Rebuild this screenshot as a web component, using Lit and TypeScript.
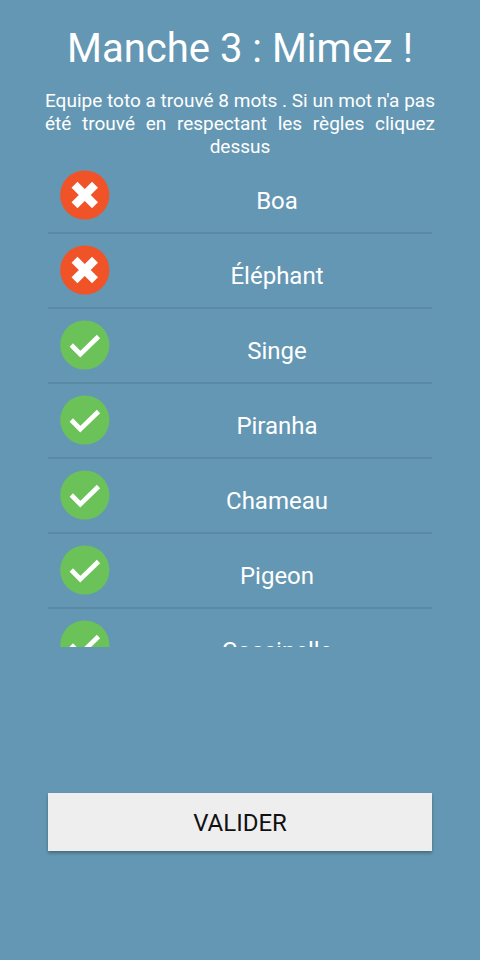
import { LitElement, html, css, svg } from "lit";
import { customElement, property, state } from "lit/decorators.js";

interface Word {
  label: string;
  found: boolean;
}

@customElement("word-row")
export class WordRow extends LitElement {
  @property() label = "";
  @property({ type: Boolean }) found = false;

  static styles = css`
    :host {
      display: block;
    }
    .row {
      display: grid;
      grid-template-columns: 50px 1fr;
      column-gap: 12px;
      align-items: center;
      width: 100%;
      height: 75px;
      padding: 0 0 2px 12px;
      border: 0;
      border-bottom: 2px solid #5a8aa4;
      background: none;
      color: #fff;
      font: 24px/30px Roboto, sans-serif;
      text-align: center;
      cursor: pointer;
    }
    .icon {
      display: block;
      width: 50px;
      height: 50px;
    }
    .label {
      padding-top: 12px;
    }
  `;

  render() {
    const mark = this.found
      ? svg`<circle cx="24.8" cy="25" r="24.6" fill="#6bc259"/>
          <path d="M11.3 25 20.3 34.2 38.5 16.5" fill="none" stroke="#fff" stroke-width="4.7"/>`
      : svg`<circle cx="24.8" cy="25" r="24.6" fill="#f15329"/>
          <path d="M14.5 14.8 35 35.2M35 14.8 14.5 35.2" stroke="#fff" stroke-width="8.4"/>`;
    return html`
      <button class="row" type="button" aria-pressed=${this.found ? "true" : "false"}>
        <svg class="icon" viewBox="0 0 50 50" aria-hidden="true">${mark}</svg>
        <span class="label">${this.label}</span>
      </button>
    `;
  }
}

@customElement("app-root")
export class AppRoot extends LitElement {
  @state() private words: Word[] = [
    { label: "Boa", found: false },
    { label: "Éléphant", found: false },
    { label: "Singe", found: true },
    { label: "Piranha", found: true },
    { label: "Chameau", found: true },
    { label: "Pigeon", found: true },
    { label: "Coccinelle", found: true },
  ];

  static styles = css`
    :host {
      display: block;
      box-sizing: border-box;
      min-height: 100vh;
      padding: 25px 10%;
      background: #6497b3;
      color: #fff;
      font-family: Roboto, sans-serif;
    }
    .title {
      margin: 0;
      font-size: 40px;
      line-height: 48px;
      font-weight: 400;
      text-align: center;
      white-space: nowrap;
    }
    .hint {
      margin: 16px -3px 0;
      font-size: 19px;
      line-height: 23px;
      text-align: justify;
      text-align-last: center;
    }
    .words {
      max-height: 488px;
      margin: 1px 0 0;
      padding: 0;
      list-style: none;
      overflow-y: auto;
      scrollbar-width: none;
    }
    .submit {
      display: block;
      width: 100%;
      height: 58px;
      margin-top: 146px;
      padding: 2px 0 0;
      border: 0;
      background: #eee;
      color: #111;
      font: 24px/30px Roboto, sans-serif;
      box-shadow: 0 2px 3px rgba(0, 0, 0, 0.3);
      cursor: pointer;
    }
  `;

  private toggle(index: number) {
    this.words = this.words.map((w, i) => (i === index ? { ...w, found: !w.found } : w));
  }

  render() {
    return html`
      <h1 class="title">Manche 3 : Mimez !</h1>
      <p class="hint">
        Equipe toto a trouvé 8 mots . Si un mot n'a pas été trouvé en respectant les règles
        cliquez dessus
      </p>
      <ul class="words">
        ${this.words.map(
          (w, i) => html`<li>
            <word-row .label=${w.label} .found=${w.found} @click=${() => this.toggle(i)}></word-row>
          </li>`
        )}
      </ul>
      <button class="submit" type="button">VALIDER</button>
    `;
  }
}
